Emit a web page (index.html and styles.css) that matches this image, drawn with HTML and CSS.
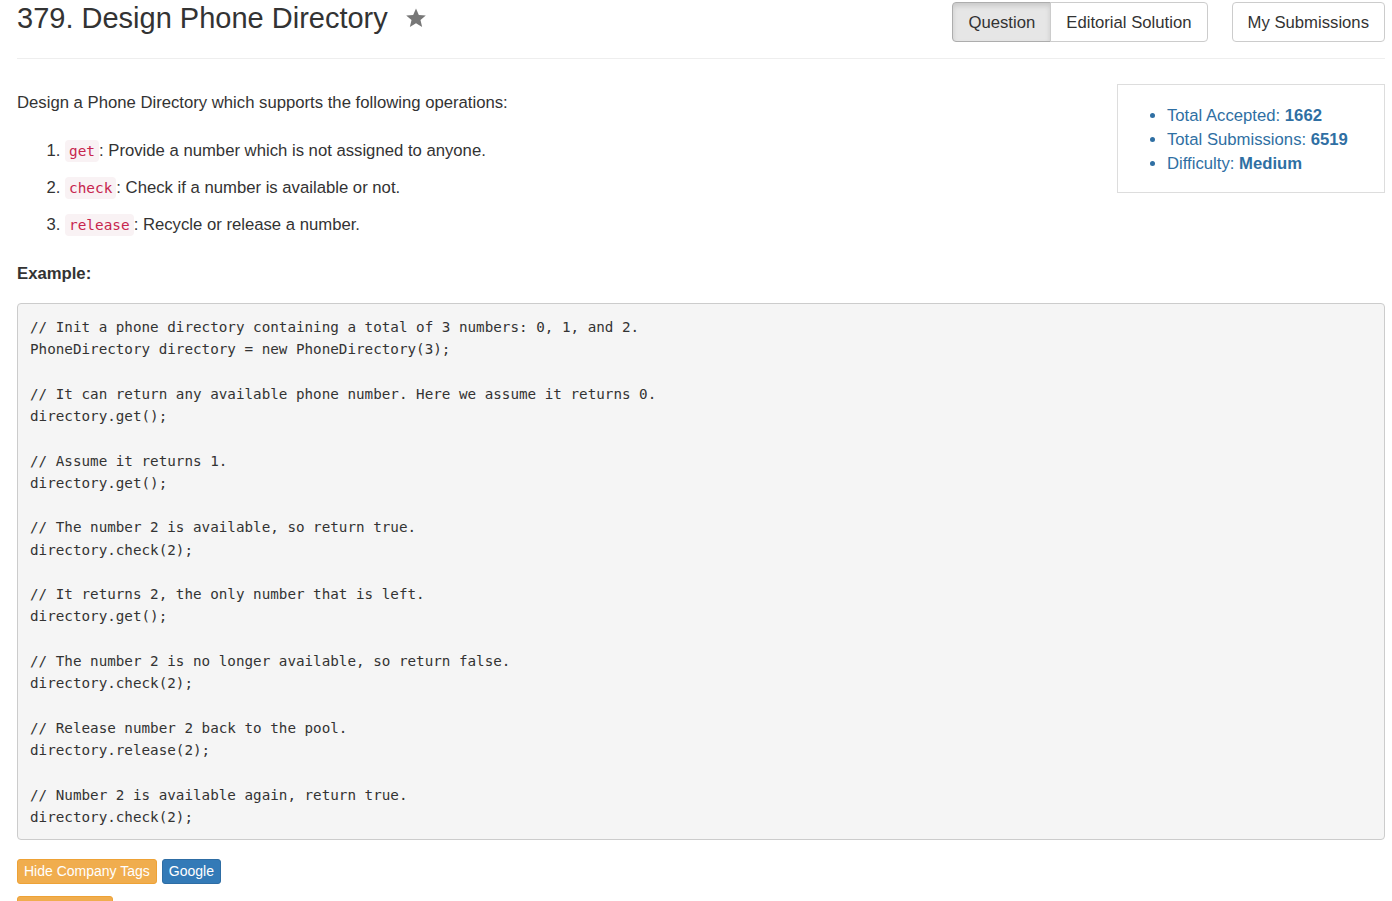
FILE: index.html
```html
<!DOCTYPE html>
<html lang="en">
<head>
<meta charset="utf-8">
<title>379. Design Phone Directory</title>
<link rel="stylesheet" href="styles.css">
</head>
<body>
<div class="page">
  <header class="header">
    <h1 class="title">379. Design Phone Directory
      <svg class="star" viewBox="0 0 24 24" width="22" height="22" aria-hidden="true"><path d="M12 1.5l3.1 7.1 7.6.6-5.8 5 1.8 7.5L12 17.7l-6.7 4 1.8-7.5-5.8-5 7.6-.6z" fill="#777"/></svg>
    </h1>
    <div class="actions">
      <div class="btn-group">
        <a class="btn active">Question</a><a class="btn">Editorial Solution</a>
      </div>
      <a class="btn single">My Submissions</a>
    </div>
  </header>

  <section class="top">
    <div class="desc">
      <p class="intro">Design a Phone Directory which supports the following operations:</p>
      <ol class="ops">
        <li><code>get</code>: Provide a number which is not assigned to anyone.</li>
        <li><code>check</code>: Check if a number is available or not.</li>
        <li><code>release</code>: Recycle or release a number.</li>
      </ol>
    </div>
    <aside class="stats">
      <ul>
        <li>Total Accepted: <strong>1662</strong></li>
        <li>Total Submissions: <strong>6519</strong></li>
        <li>Difficulty: <strong>Medium</strong></li>
      </ul>
    </aside>
  </section>

  <p class="example"><strong>Example:</strong></p>
<pre class="code">// Init a phone directory containing a total of 3 numbers: 0, 1, and 2.
PhoneDirectory directory = new PhoneDirectory(3);

// It can return any available phone number. Here we assume it returns 0.
directory.get();

// Assume it returns 1.
directory.get();

// The number 2 is available, so return true.
directory.check(2);

// It returns 2, the only number that is left.
directory.get();

// The number 2 is no longer available, so return false.
directory.check(2);

// Release number 2 back to the pool.
directory.release(2);

// Number 2 is available again, return true.
directory.check(2);</pre>

  <div class="tags">
    <span class="tag warn">Hide Company Tags</span>
    <span class="tag primary">Google</span>
  </div>
  <div class="tags">
    <span class="tag warn wide">Hide Tags</span>
  </div>
</div>
</body>
</html>
```

FILE: styles.css
```css
* { box-sizing: border-box; }

html, body {
  margin: 0;
  padding: 0;
  background: #fff;
}

body {
  font-family: "Liberation Sans", Arial, Helvetica, sans-serif;
  font-size: 16.7px;
  line-height: 22px;
  color: #333;
}

.page {
  padding: 0 7px 0 17px;
}

.header {
  display: flex;
  justify-content: space-between;
  align-items: flex-start;
  height: 59px;
  border-bottom: 1px solid #eee;
  padding-top: 2px;
}

.title {
  margin: 0;
  font-size: 29px;
  font-weight: 400;
  line-height: 33px;
  color: #333;
  display: flex;
  align-items: center;
}

.star {
  margin-left: 17px;
  margin-top: -2px;
}

.actions {
  display: flex;
  gap: 24px;
}

.btn-group {
  display: flex;
}

.btn {
  display: inline-block;
  font-size: 16.7px;
  line-height: 22px;
  padding: 9px 15px 7px;
  border: 1px solid #ccc;
  background: #fff;
  color: #333;
  border-radius: 4px;
  text-decoration: none;
  cursor: pointer;
}

.btn-group .btn:first-child {
  border-top-right-radius: 0;
  border-bottom-right-radius: 0;
}

.btn-group .btn:last-child {
  border-top-left-radius: 0;
  border-bottom-left-radius: 0;
  margin-left: -1px;
}

.btn.active {
  background: #e6e6e6;
  border-color: #adadad;
  box-shadow: inset 0 3px 5px rgba(0, 0, 0, 0.125);
}

.top {
  display: flex;
  justify-content: space-between;
  align-items: flex-start;
  margin-top: 25px;
}

.desc {
  padding-top: 8px;
}

.intro {
  margin: 0;
}

.ops {
  margin: 26px 0 0;
  padding-left: 48px;
}

.ops li + li {
  margin-top: 15px;
}

code {
  font-family: "DejaVu Sans Mono", "Liberation Mono", monospace;
  font-size: 14.4px;
  color: #c7254e;
  background: #f9f2f4;
  padding: 3px 4px;
  border-radius: 4px;
}

.stats {
  width: 268px;
  border: 1px solid #ddd;
  padding: 19px 10px 16px 49px;
  color: #2f6fa3;
}

.stats ul {
  margin: 0;
  padding: 0;
  line-height: 24px;
}

.stats strong {
  font-weight: 700;
}

.example {
  margin: 27px 0 0;
}

.code {
  margin: 18px 0 0;
  padding: 12px 12px 11px;
  background: #f5f5f5;
  border: 1px solid #ccc;
  border-radius: 4px;
  font-family: "DejaVu Sans Mono", "Liberation Mono", monospace;
  font-size: 14.25px;
  line-height: 22.27px;
  color: #333;
  white-space: pre;
  overflow: hidden;
}

.tags {
  display: flex;
  gap: 5px;
  margin-top: 19px;
}

.tags + .tags {
  margin-top: 12px;
}

.tag {
  display: inline-block;
  font-size: 14px;
  line-height: 23px;
  padding: 0 6px;
  border: 1px solid transparent;
  border-radius: 3px;
  color: #fff;
}

.tag.warn {
  background: #f0ad4e;
  border-color: #eea236;
}

.tag.primary {
  background: #337ab7;
  border-color: #2e6da4;
}

.tag.wide {
  min-width: 96px;
}
```
